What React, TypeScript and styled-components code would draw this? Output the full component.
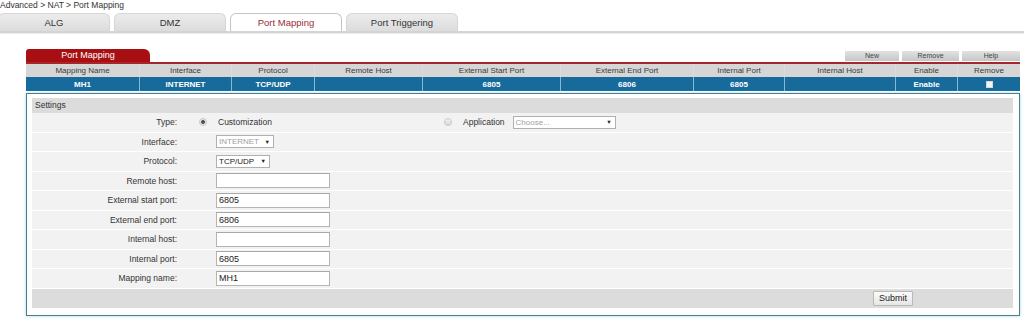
import React from 'react';
import styled, { createGlobalStyle } from 'styled-components';

const GlobalStyle = createGlobalStyle`
    html, body {
        margin: 0;
        padding: 0;
        background: #ffffff;
        overflow: hidden;
    }
    body {
        font-family: "Liberation Sans", Arial, sans-serif;
        color: #333333;
    }
`;

const Page = styled.div`
    width: 1024px;
    height: 322px;
    overflow: hidden;
`;

const Breadcrumb = styled.div`
    height: 11px;
    line-height: 11px;
    font-size: 8.5px;
    color: #333333;
    white-space: nowrap;
`;

const TabBar = styled.div`
    margin-top: 2px;
    display: flex;
    align-items: flex-end;
    gap: 4px;
    margin-left: -2px;
    border-bottom: 2px solid #d4d4d4;
    box-shadow: 0 1px 0 #ececec;
`;

const Tab = styled.div<{ active?: boolean }>`
    width: 112px;
    height: 18px;
    box-sizing: border-box;
    display: flex;
    align-items: center;
    justify-content: center;
    font-size: 9.5px;
    border: 1px solid ${({ active }) => (active ? '#c4c4c4' : '#d6d6d6')};
    border-bottom: none;
    border-radius: 6px 6px 0 0;
    background: ${({ active }) =>
        (active ? '#ffffff' : 'linear-gradient(#ececec, #dcdcdc)')};
    color: ${({ active }) => (active ? '#9b2b35' : '#333333')};
`;

const Content = styled.div`
    padding: 16px 4px 0 26px;
`;

const TableBar = styled.div`
    display: flex;
    align-items: flex-end;
    justify-content: space-between;
    border-bottom: 2px solid #a8262b;
`;

const RedTab = styled.div`
    width: 124px;
    height: 13px;
    line-height: 13px;
    text-align: center;
    font-size: 9px;
    color: #ffffff;
    background: #a80f12;
    border-radius: 3px 6px 0 0;
`;

const ActionGroup = styled.div`
    display: flex;
    gap: 3px;
    margin-bottom: 1px;
`;

const ActionButton = styled.div<{ w: number }>`
    width: ${({ w }) => w}px;
    height: 10px;
    line-height: 10px;
    text-align: center;
    font-size: 7px;
    color: #444444;
    background: linear-gradient(#e2e2e2, #c6c6c6);
`;

const GridRow = styled.div<{ variant: 'head' | 'data' }>`
    display: grid;
    grid-template-columns: 113px 92px 83px 108px 138px 133px 91px 111px 62px 63px;
    height: ${({ variant }) => (variant === 'head' ? 13 : 14)}px;
    background: ${({ variant }) => (variant === 'head' ? '#d6d6d6' : '#176b9c')};
    color: ${({ variant }) => (variant === 'head' ? '#3a3a3a' : '#ffffff')};
    font-size: 8px;
    font-weight: ${({ variant }) => (variant === 'head' ? 'normal' : 'bold')};
`;

const GridCell = styled.div<{ variant: 'head' | 'data' }>`
    display: flex;
    align-items: center;
    justify-content: center;
    white-space: nowrap;
    border-left: 1px solid
        ${({ variant }) => (variant === 'head' ? '#dcdcdc' : '#8ab8d4')};
    &:first-child {
        border-left: none;
    }
`;

const CheckSquare = styled.span`
    width: 7px;
    height: 7px;
    background: #f4f4f4;
    border: 1px solid #d8d8d8;
    box-sizing: border-box;
`;

const SettingsPanel = styled.div`
    margin-top: 2px;
    width: 994px;
    height: 223px;
    box-sizing: border-box;
    border: 1px solid #4b7d88;
    box-shadow: 0 0 3px rgba(120, 200, 225, 0.7);
    padding: 4px 6px 0 5px;
    background: #ffffff;
`;

const PanelTitle = styled.div`
    height: 15px;
    line-height: 15px;
    padding-left: 3px;
    font-size: 8.5px;
    background: #dcdcdc;
    color: #333333;
`;

const FormRow = styled.div`
    display: grid;
    grid-template-columns: 148px 36px 1fr;
    align-items: center;
    height: 19.5px;
    box-sizing: border-box;
    border-bottom: 1px solid #ffffff;
    background: #f2f2f2;
    font-size: 8.5px;
`;

const FieldLabel = styled.div`
    text-align: right;
    padding-right: 3px;
    color: #333333;
`;

const Marker = styled.div`
    display: flex;
    justify-content: flex-end;
    padding-right: 9px;
`;

const Radio = styled.span<{ checked?: boolean }>`
    width: 8px;
    height: 8px;
    border-radius: 50%;
    box-sizing: border-box;
    border: 1px solid #c8c8c8;
    background: ${({ checked }) =>
        (checked
            ? 'radial-gradient(circle, #555 0 1.6px, #e4e4e4 2.2px)'
            : 'linear-gradient(#f2f2f2, #d8d8d8)')};
    display: inline-block;
    flex: none;
`;

const TypeValue = styled.div`
    display: flex;
    align-items: center;
`;

const OptionText = styled.span`
    width: 228px;
    padding-left: 2px;
    box-sizing: border-box;
    color: #333333;
`;

const AppOption = styled.div`
    display: flex;
    align-items: center;
`;

const AppText = styled.span`
    margin-left: 11px;
    margin-right: 8px;
`;

const TextField = styled.input`
    width: 114px;
    height: 15px;
    box-sizing: border-box;
    margin: 0;
    padding: 0 2px;
    border: 1px solid #b4b4b4;
    border-top-color: #a8a8a8;
    background: #ffffff;
    font-family: "Liberation Sans", Arial, sans-serif;
    font-size: 9px;
    color: #222222;
    outline: none;
`;

const SelectBox = styled.div<{ w: number; muted?: boolean }>`
    width: ${({ w }) => w}px;
    height: 13px;
    box-sizing: border-box;
    border: 1px solid #b0b0b0;
    background: #ffffff;
    display: flex;
    align-items: center;
    justify-content: space-between;
    padding: 0 3px 0 2px;
    font-size: 8px;
    white-space: nowrap;
    overflow: hidden;
    color: ${({ muted }) => (muted ? '#a0a0a0' : '#222222')};
`;

const Arrow = styled.span`
    font-size: 5.5px;
    color: #222222;
    margin-left: 3px;
`;

const PanelFooter = styled.div`
    height: 19px;
    background: #dcdcdc;
    display: flex;
    align-items: center;
    justify-content: flex-end;
    padding-right: 100px;
`;

const SubmitButton = styled.button`
    height: 15px;
    padding: 0 5px;
    margin: 0;
    font-family: "Liberation Sans", Arial, sans-serif;
    font-size: 9px;
    color: #222222;
    border: 1px solid #b8b8b8;
    border-radius: 1px;
    background: linear-gradient(#fbfbfb, #e6e6e6);
`;

const tabs = ['ALG', 'DMZ', 'Port Mapping', 'Port Triggering'];

const headers = [
    'Mapping Name',
    'Interface',
    'Protocol',
    'Remote Host',
    'External Start Port',
    'External End Port',
    'Internal Port',
    'Internal Host',
    'Enable',
    'Remove',
];

const rowData = ['MH1', 'INTERNET', 'TCP/UDP', '', '6805', '6806', '6805', '', 'Enable'];

const fields: [string, string][] = [
    ['Remote host:', ''],
    ['External start port:', '6805'],
    ['External end port:', '6806'],
    ['Internal host:', ''],
    ['Internal port:', '6805'],
    ['Mapping name:', 'MH1'],
];

export default function App() {
    return (
        <Page>
            <GlobalStyle />
            <Breadcrumb>Advanced &gt; NAT &gt; Port Mapping</Breadcrumb>
            <TabBar>
                {tabs.map((t) => (
                    <Tab key={t} active={t === 'Port Mapping'}>
                        {t}
                    </Tab>
                ))}
            </TabBar>
            <Content>
                <TableBar>
                    <RedTab>Port Mapping</RedTab>
                    <ActionGroup>
                        <ActionButton w={54}>New</ActionButton>
                        <ActionButton w={57}>Remove</ActionButton>
                        <ActionButton w={58}>Help</ActionButton>
                    </ActionGroup>
                </TableBar>
                <GridRow variant='head'>
                    {headers.map((h) => (
                        <GridCell key={h} variant='head'>
                            {h}
                        </GridCell>
                    ))}
                </GridRow>
                <GridRow variant='data'>
                    {rowData.map((d, i) => (
                        <GridCell key={i} variant='data'>
                            {d}
                        </GridCell>
                    ))}
                    <GridCell variant='data'>
                        <CheckSquare />
                    </GridCell>
                </GridRow>
                <SettingsPanel>
                    <PanelTitle>Settings</PanelTitle>
                    <FormRow>
                        <FieldLabel>Type:</FieldLabel>
                        <Marker>
                            <Radio checked />
                        </Marker>
                        <TypeValue>
                            <OptionText>Customization</OptionText>
                            <AppOption>
                                <Radio />
                                <AppText>Application</AppText>
                                <SelectBox w={103} muted>
                                    Choose...
                                    <Arrow>▼</Arrow>
                                </SelectBox>
                            </AppOption>
                        </TypeValue>
                    </FormRow>
                    <FormRow>
                        <FieldLabel>Interface:</FieldLabel>
                        <span />
                        <SelectBox w={58} muted>
                            INTERNET
                            <Arrow>▼</Arrow>
                        </SelectBox>
                    </FormRow>
                    <FormRow>
                        <FieldLabel>Protocol:</FieldLabel>
                        <span />
                        <SelectBox w={54}>
                            TCP/UDP
                            <Arrow>▼</Arrow>
                        </SelectBox>
                    </FormRow>
                    {fields.map(([label, value]) => (
                        <FormRow key={label}>
                            <FieldLabel>{label}</FieldLabel>
                            <span />
                            <div>
                                <TextField readOnly value={value} />
                            </div>
                        </FormRow>
                    ))}
                    <PanelFooter>
                        <SubmitButton>Submit</SubmitButton>
                    </PanelFooter>
                </SettingsPanel>
            </Content>
        </Page>
    );
}
